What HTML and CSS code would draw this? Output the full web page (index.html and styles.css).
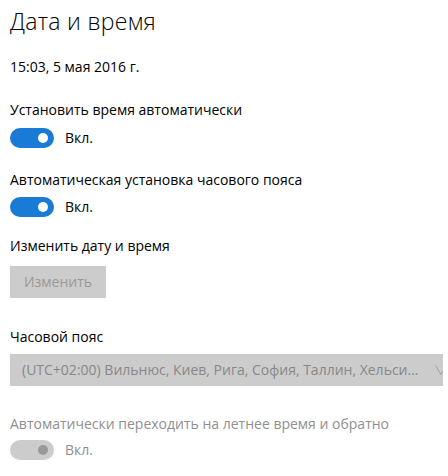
FILE: index.html
```html
<!DOCTYPE html>
<html lang="ru">
<head>
<meta charset="utf-8">
<title>Дата и время</title>
<link rel="stylesheet" href="styles.css">
</head>
<body>
<div class="page">
  <h1 class="title">Дата и время</h1>
  <div class="date">15:03, 5 мая 2016 г.</div>

  <div class="label l1">Установить время автоматически</div>
  <div class="toggle-row t1">
    <span class="toggle on"><span class="knob"></span></span>
    <span class="state">Вкл.</span>
  </div>

  <div class="label l2">Автоматическая установка часового пояса</div>
  <div class="toggle-row t2">
    <span class="toggle on"><span class="knob"></span></span>
    <span class="state">Вкл.</span>
  </div>

  <div class="label l3">Изменить дату и время</div>
  <div class="btn">Изменить</div>

  <div class="label l4">Часовой пояс</div>
  <div class="tz-clip">
    <div class="tz-select">
      <span class="tz-text">(UTC+02:00) Вильнюс, Киев, Рига, София, Таллин, Хельси...</span>
      <svg class="chev" width="12" height="10" viewBox="0 0 12 10"><path d="M0.5 0.5 L6 9.5 L11.5 0.5" fill="none" stroke="#a0a0a0" stroke-width="1"/></svg>
    </div>
  </div>

  <div class="label l5 disabled">Автоматически переходить на летнее время и обратно</div>
  <div class="toggle-row t3">
    <span class="toggle off"><span class="knob"></span></span>
    <span class="state disabled">Вкл.</span>
  </div>
</div>
</body>
</html>
```

FILE: styles.css
```css
html, body {
  margin: 0;
  padding: 0;
  background: #ffffff;
}
body {
  font-family: "Open Sans", "Noto Sans", sans-serif;
  font-size: 14px;
  line-height: 20px;
  color: #000;
  overflow: hidden;
}
.page {
  padding-left: 10px;
  display: flex;
  flex-direction: column;
  align-items: flex-start;
}
.title {
  margin: 5px 0 0 0;
  font-weight: 300;
  font-size: 23px;
  letter-spacing: 0.3px;
  line-height: 32px;
}
.date {
  margin-top: 20px;
}
.label {
  white-space: nowrap;
}
.l1 { margin-top: 23px; }
.l2 { margin-top: 22px; }
.l3 { margin-top: 19px; }
.l4 { margin-top: 29px; }
.l5 { margin-top: 28px; }
.disabled { color: #8f8f8f; }

.toggle-row {
  display: flex;
  align-items: center;
  gap: 11px;
  height: 20px;
}
.t1 { margin-top: 8px; }
.t2 { margin-top: 7px; }
.t3 { margin-top: 6px; }
.toggle {
  width: 44px;
  height: 20px;
  border-radius: 10px;
  display: flex;
  align-items: center;
  justify-content: flex-end;
  padding-right: 6px;
  box-sizing: border-box;
}
.toggle.on { background: #1a7bd6; }
.toggle.off { background: #cccccc; }
.knob {
  width: 10px;
  height: 10px;
  border-radius: 50%;
}
.toggle.on .knob { background: #ffffff; }
.toggle.off .knob { background: #999999; }
.state { line-height: 20px; }

.btn {
  margin-top: 10px;
  width: 96px;
  height: 32px;
  background: #cccccc;
  color: #999999;
  display: flex;
  align-items: center;
  justify-content: center;
}

.tz-clip {
  margin-top: 7px;
  width: 433px;
  overflow: hidden;
}
.tz-select {
  width: 460px;
  height: 32px;
  background: #cccccc;
  display: flex;
  align-items: center;
  padding-left: 12px;
  box-sizing: border-box;
  color: #888888;
  white-space: nowrap;
}
.chev {
  margin-left: auto;
  margin-right: 23px;
}
```
